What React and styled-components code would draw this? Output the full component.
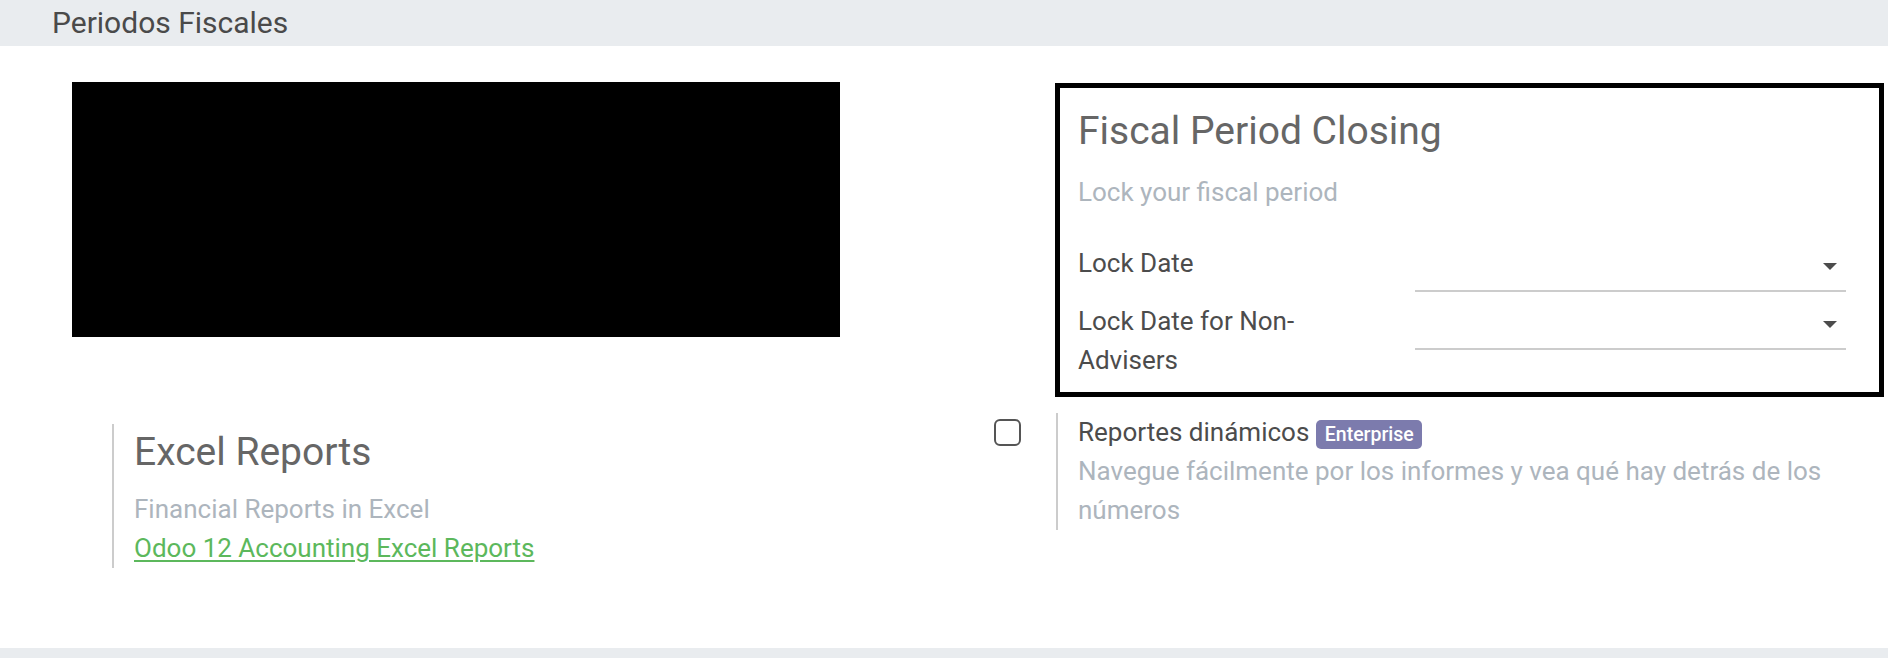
import React from "react";
import styled, { createGlobalStyle } from "styled-components";

const GlobalStyle = createGlobalStyle`
  * {
    box-sizing: border-box;
  }
  body {
    margin: 0;
    background: #ffffff;
    font-family: Roboto, "Liberation Sans", sans-serif;
  }
`;

const SectionTitle = styled.h2`
  margin: 0;
  height: 46px;
  line-height: 46px;
  padding-left: 52px;
  background: #e9ecef;
  color: #4a4a4a;
  font-size: 30px;
  font-weight: 400;
`;

const SettingsGrid = styled.div`
  display: grid;
  grid-template-columns: 922px 1fr;
  row-gap: 16px;
  padding: 36px 0 80px 72px;
`;

const Redacted = styled.div`
  width: 768px;
  height: 255px;
  background: #000000;
`;

const ClosingBox = styled.div`
  width: 829px;
  margin: 1px 0 0 61px;
  border: 5px solid #000000;
  padding: 20px 33px 12px 18px;
`;

const BoxTitle = styled.h4`
  margin: 0;
  padding-top: ${(p) => p.$pad || 0}px;
  font-size: 39px;
  line-height: ${(p) => p.$lh || 1.2};
  font-weight: 400;
  color: #666666;
`;

const Muted = styled.div`
  margin-top: ${(p) => p.$top || 0}px;
  font-size: 26px;
  line-height: 39px;
  color: #adb5bd;
`;

const FieldTable = styled.div`
  display: flex;
  flex-direction: column;
  gap: 10px;
  margin-top: 32px;
`;

const FieldRow = styled.div`
  display: grid;
  grid-template-columns: 337px 1fr;
  align-items: start;
`;

const FieldLabel = styled.div`
  padding-right: 70px;
  font-size: 26px;
  line-height: 39px;
  color: #4c4c4c;
`;

const DateInput = styled.div`
  height: 48px;
  display: flex;
  align-items: center;
  justify-content: flex-end;
  padding-right: 9px;
  border-bottom: 2px solid #cccccc;
`;

const SettingBox = styled.div`
  display: flex;
  align-items: flex-start;
  margin-top: ${(p) => p.$top || 0}px;
`;

const LeftPane = styled.div`
  flex: none;
  width: ${(p) => p.$width}px;
`;

const RightPane = styled.div`
  border-left: 2px solid #cccccc;
  padding: 0 30px 0 20px;
`;

const Checkbox = styled.div`
  width: 27px;
  height: 27px;
  margin-top: 6px;
  border: 2px solid #555555;
  border-radius: 6px;
  background: #ffffff;
`;

const SettingName = styled.div`
  font-size: 26px;
  line-height: 39px;
  color: #4c4c4c;
`;

const Badge = styled.span`
  display: inline-block;
  margin-left: 7px;
  padding: 4.75px 8.5px;
  border-radius: 5px;
  background: #7c7bad;
  color: #ffffff;
  font-size: 19.5px;
  line-height: 1;
  font-weight: 500;
`;

const ReportLink = styled.a`
  display: block;
  font-size: 26px;
  line-height: 39px;
  color: #5cb85c;
  text-decoration: underline;
  text-underline-offset: 3px;
`;

const Caret = () => (
  <svg width="14" height="7" viewBox="0 0 14 7">
    <path d="M0 0h14L7 7z" fill="#4c4c4c" />
  </svg>
);

export default function App() {
  return (
    <>
      <GlobalStyle />
      <SectionTitle>Periodos Fiscales</SectionTitle>
      <SettingsGrid>
        <Redacted />
        <ClosingBox>
          <BoxTitle>Fiscal Period Closing</BoxTitle>
          <Muted $top={18}>Lock your fiscal period</Muted>
          <FieldTable>
            <FieldRow>
              <FieldLabel>Lock Date</FieldLabel>
              <DateInput>
                <Caret />
              </DateInput>
            </FieldRow>
            <FieldRow>
              <FieldLabel>Lock Date for Non-Advisers</FieldLabel>
              <DateInput>
                <Caret />
              </DateInput>
            </FieldRow>
          </FieldTable>
        </ClosingBox>

        <SettingBox $top={11}>
          <LeftPane $width={40} />
          <RightPane>
            <BoxTitle $lh={1.3} $pad={3}>
              Excel Reports
            </BoxTitle>
            <Muted $top={13}>Financial Reports in Excel</Muted>
            <ReportLink href="#">Odoo 12 Accounting Excel Reports</ReportLink>
          </RightPane>
        </SettingBox>
        <SettingBox>
          <LeftPane $width={62}>
            <Checkbox />
          </LeftPane>
          <RightPane>
            <SettingName>
              Reportes dinámicos
              <Badge>Enterprise</Badge>
            </SettingName>
            <Muted>
              Navegue fácilmente por los informes y vea qué hay detrás de los
              números
            </Muted>
          </RightPane>
        </SettingBox>
      </SettingsGrid>
      <SectionTitle />
    </>
  );
}
